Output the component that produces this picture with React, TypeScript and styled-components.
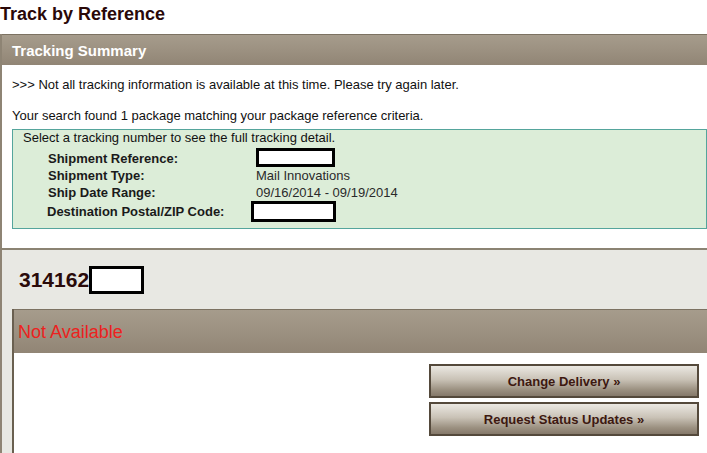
import React from "react";
import styled, { createGlobalStyle } from "styled-components";

const Global = createGlobalStyle`
  html, body { margin: 0; padding: 0; background: #ffffff; }
  body { font-family: "Liberation Sans", Arial, sans-serif; }
`;

const Page = styled.div`
  width: 707px;
  height: 453px;
  overflow: hidden;
  font-family: "Liberation Sans", Arial, sans-serif;
  font-size: 13px;
  color: #1c1c1c;
`;

const Title = styled.h1`
  margin: 0;
  height: 34px;
  box-sizing: border-box;
  padding: 3px 0 0 0;
  font-size: 18px;
  line-height: 22px;
  font-weight: bold;
  color: #2a0808;
`;

const SummaryPanel = styled.section`
  border-left: 2px solid #8e8474;
  background: #ffffff;
`;

const BarHeader = styled.div<{ $height: number }>`
  height: ${(p) => p.$height}px;
  box-sizing: border-box;
  display: flex;
  align-items: center;
  border-top: 1px solid #7c7262;
  background: linear-gradient(to bottom, #a69c8c 0%, #9c9181 50%, #918575 100%);
`;

const HeaderTitle = styled.h2`
  margin: 0 0 0 10px;
  font-size: 15px;
  font-weight: bold;
  color: #ffffff;
`;

const SummaryBody = styled.div`
  padding: 12px 0 19px 10px;
`;

const Notice = styled.p<{ $gap: number }>`
  margin: 0 0 ${(p) => p.$gap}px 0;
  line-height: 15px;
  color: #111;
`;

const CriteriaBox = styled.div`
  border: 1px solid #55a59c;
  background: #dcedd8;
  padding: 0 0 6px 10px;
`;

const Instruction = styled.div`
  line-height: 15px;
  margin-bottom: 2px;
  color: #111;
`;

const CriteriaGrid = styled.div`
  display: grid;
  grid-template-columns: 208px 1fr;
  align-items: center;
  margin-left: 25px;
`;

const Label = styled.div<{ $h: number; $shift?: number; $drop?: number }>`
  font-weight: bold;
  color: #1a1a1a;
  line-height: 15px;
  height: ${(p) => p.$h}px;
  box-sizing: border-box;
  padding-top: ${(p) => p.$drop ?? 0}px;
  display: flex;
  align-items: center;
  margin-left: ${(p) => p.$shift ?? 0}px;
`;

const Value = styled.div<{ $h: number }>`
  color: #2a2a2a;
  line-height: 15px;
  height: ${(p) => p.$h}px;
  display: flex;
  align-items: center;
`;

const Redacted = styled.span<{ $w: number; $h: number; $shift?: number; $b?: number }>`
  display: inline-block;
  box-sizing: border-box;
  width: ${(p) => p.$w}px;
  height: ${(p) => p.$h}px;
  margin-left: ${(p) => p.$shift ?? 0}px;
  border: ${(p) => p.$b ?? 3}px solid #000;
  background: #fff;
`;

const DetailSection = styled.section`
  border-left: 2px solid #8e8474;
  border-top: 2px solid #8b8373;
  background: #e8e8e3;
  height: 205px;
`;

const TrackingRow = styled.div`
  height: 59px;
  box-sizing: border-box;
  display: flex;
  align-items: center;
  padding-left: 17px;
`;

const TrackingNumber = styled.span`
  font-size: 21px;
  font-weight: bold;
  color: #2a0a0a;
  line-height: 24px;
`;

const ResultPanel = styled.div`
  margin-left: 10px;
  border-left: 2px solid #6a6050;
  background: #ffffff;
  height: 146px;
`;

const StatusText = styled.span`
  margin-left: 4px;
  margin-top: 1px;
  font-size: 18px;
  color: #ec2220;
`;

const Actions = styled.div`
  display: flex;
  flex-direction: column;
  align-items: flex-end;
  gap: 4px;
  padding: 11px 8px 0 0;
`;

const ActionButton = styled.button`
  width: 270px;
  height: 34px;
  box-sizing: border-box;
  border: 2px solid #54493b;
  background: linear-gradient(to bottom, #ebe8e2 0%, #c9c2b6 45%, #9a8f7f 80%, #85796a 100%);
  font-family: "Liberation Sans", Arial, sans-serif;
  font-size: 13px;
  font-weight: bold;
  color: #3d1810;
  cursor: pointer;
  padding: 0;
`;

export default function App() {
  return (
    <Page>
      <Global />
      <Title>Track by Reference</Title>
      <SummaryPanel>
        <BarHeader $height={31}>
          <HeaderTitle>Tracking Summary</HeaderTitle>
        </BarHeader>
        <SummaryBody>
          <Notice $gap={16}>
            &gt;&gt;&gt; Not all tracking information is available at this time. Please try again later.
          </Notice>
          <Notice $gap={6}>Your search found 1 package matching your package reference criteria.</Notice>
          <CriteriaBox>
            <Instruction>Select a tracking number to see the full tracking detail.</Instruction>
            <CriteriaGrid>
              <Label $h={20} $drop={3}>Shipment Reference:</Label>
              <Value $h={20}>
                <Redacted $w={79} $h={19} />
              </Value>
              <Label $h={17}>Shipment Type:</Label>
              <Value $h={17}>Mail Innovations</Value>
              <Label $h={17}>Ship Date Range:</Label>
              <Value $h={17}>09/16/2014 - 09/19/2014</Value>
              <Label $h={21} $shift={-1}>Destination Postal/ZIP Code:</Label>
              <Value $h={21}>
                <Redacted $w={85} $h={21} $shift={-5} />
              </Value>
            </CriteriaGrid>
          </CriteriaBox>
        </SummaryBody>
      </SummaryPanel>
      <DetailSection>
        <TrackingRow>
          <TrackingNumber>314162</TrackingNumber>
          <Redacted $w={55} $h={28} $b={3} />
        </TrackingRow>
        <ResultPanel>
          <BarHeader $height={44}>
            <StatusText>Not Available</StatusText>
          </BarHeader>
          <Actions>
            <ActionButton type="button">Change Delivery »</ActionButton>
            <ActionButton type="button">Request Status Updates »</ActionButton>
          </Actions>
        </ResultPanel>
      </DetailSection>
    </Page>
  );
}
